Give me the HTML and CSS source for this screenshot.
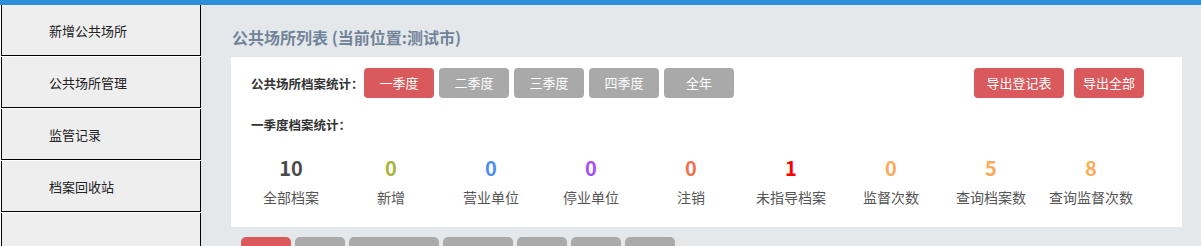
FILE: index.html
```html
<!DOCTYPE html>
<html lang="zh-CN">
<head>
<meta charset="utf-8">
<title>公共场所列表</title>
<link rel="stylesheet" href="styles.css">
</head>
<body>
<div class="topbar"></div>
<div class="layout">
  <nav class="sidebar">
    <div class="nav-item">新增公共场所</div>
    <div class="nav-item">公共场所管理</div>
    <div class="nav-item">监管记录</div>
    <div class="nav-item">档案回收站</div>
    <div class="nav-item nav-empty"></div>
  </nav>
  <main class="main">
    <h1 class="title">公共场所列表 (当前位置:测试市)</h1>
    <section class="card">
      <div class="toolbar">
        <span class="row-label">公共场所档案统计：</span>
        <div class="seasons">
          <button class="btn btn-red">一季度</button>
          <button class="btn btn-gray">二季度</button>
          <button class="btn btn-gray">三季度</button>
          <button class="btn btn-gray">四季度</button>
          <button class="btn btn-gray">全年</button>
        </div>
        <div class="exports">
          <button class="btn btn-red btn-wide">导出登记表</button>
          <button class="btn btn-red">导出全部</button>
        </div>
      </div>
      <div class="sub-label">一季度档案统计：</div>
      <div class="stats">
        <div class="stat"><div class="num c-dark">10</div><div class="stat-label">全部档案</div></div>
        <div class="stat"><div class="num c-olive">0</div><div class="stat-label">新增</div></div>
        <div class="stat"><div class="num c-blue">0</div><div class="stat-label">营业单位</div></div>
        <div class="stat"><div class="num c-purple">0</div><div class="stat-label">停业单位</div></div>
        <div class="stat"><div class="num c-coral">0</div><div class="stat-label">注销</div></div>
        <div class="stat"><div class="num c-red">1</div><div class="stat-label">未指导档案</div></div>
        <div class="stat"><div class="num c-orange">0</div><div class="stat-label">监督次数</div></div>
        <div class="stat"><div class="num c-orange">5</div><div class="stat-label">查询档案数</div></div>
        <div class="stat"><div class="num c-orange">8</div><div class="stat-label">查询监督次数</div></div>
      </div>
    </section>
    <div class="tabs">
      <span class="tab tab-red w50"></span>
      <span class="tab w50"></span>
      <span class="tab w90"></span>
      <span class="tab w70"></span>
      <span class="tab w50"></span>
      <span class="tab w50"></span>
      <span class="tab w50"></span>
    </div>
  </main>
</div>
</body>
</html>
```
FILE: styles.css
```css
* { box-sizing: border-box; }
html, body { margin: 0; padding: 0; }
body {
  background: #ffffff;
  font-family: "Noto Sans CJK SC", "Noto Sans", sans-serif;
  color: #333;
  height: 246px;
  overflow: hidden;
}
.topbar {
  height: 5px;
  background: #2b90d9;
}
.layout {
  display: flex;
  height: 241px;
  overflow: hidden;
}
.sidebar {
  flex: none;
  width: 200px;
  margin-left: 1px;
  background: #ffffff;
}
.nav-item {
  height: 51px;
  margin-bottom: 1px;
  background: #eeeeee;
  border-left: 1px solid #000;
  border-right: 1px solid #000;
  border-bottom: 1px solid #000;
  padding-left: 47px;
  display: flex;
  align-items: center;
  font-size: 13px;
  color: #222;
}
.nav-empty { height: 60px; border-bottom: none; }
.main {
  flex: 1;
  background: #e4e8eb;
  padding: 22px 19px 0 30px;
  min-width: 0;
}
.title {
  margin: 0 0 10px 1px;
  height: 20px;
  line-height: 20px;
  font-size: 16px;
  font-weight: bold;
  color: #72849a;
}
.card {
  background: #ffffff;
  padding: 11px 38px 20px 20px;
}
.toolbar {
  display: flex;
  align-items: center;
  height: 30px;
}
.row-label {
  flex: none;
  width: 113px;
  font-size: 12.5px;
  font-weight: bold;
  color: #333;
}
.seasons {
  display: flex;
  gap: 5px;
}
.exports {
  margin-left: auto;
  display: flex;
  gap: 10px;
}
.btn {
  width: 70px;
  height: 30px;
  border: none;
  border-radius: 4px;
  color: #fff;
  font-family: inherit;
  font-size: 13px;
  padding: 0;
  line-height: 30px;
  text-align: center;
}
.btn-wide { width: 90px; }
.btn-red { background: #d9595c; }
.btn-gray { background: #a9a9a9; }
.sub-label {
  margin-top: 17px;
  height: 20px;
  line-height: 20px;
  font-size: 12.5px;
  font-weight: bold;
  color: #333;
}
.stats {
  display: flex;
  margin-left: -10px;
  margin-top: 21px;
}
.stat {
  width: 100px;
  text-align: center;
}
.num {
  height: 24px;
  line-height: 24px;
  font-size: 20px;
  font-weight: bold;
}
.stat-label {
  margin-top: 7px;
  height: 20px;
  line-height: 20px;
  font-size: 14px;
  color: #555;
}
.c-dark { color: #4a4a4a; }
.c-olive { color: #a6b43a; }
.c-blue { color: #4a8ff5; }
.c-purple { color: #a64ef5; }
.c-coral { color: #f2704f; }
.c-red { color: #ff0000; }
.c-orange { color: #f8ac59; }
.tabs {
  display: flex;
  gap: 4px;
  margin: 10px 0 0 10px;
}
.tab {
  display: block;
  height: 9px;
  background: #aaaaaa;
  border-radius: 5px 5px 0 0;
}
.tab-red { background: #d9595c; }
.w50 { width: 50px; }
.w70 { width: 70px; }
.w90 { width: 90px; }
```
